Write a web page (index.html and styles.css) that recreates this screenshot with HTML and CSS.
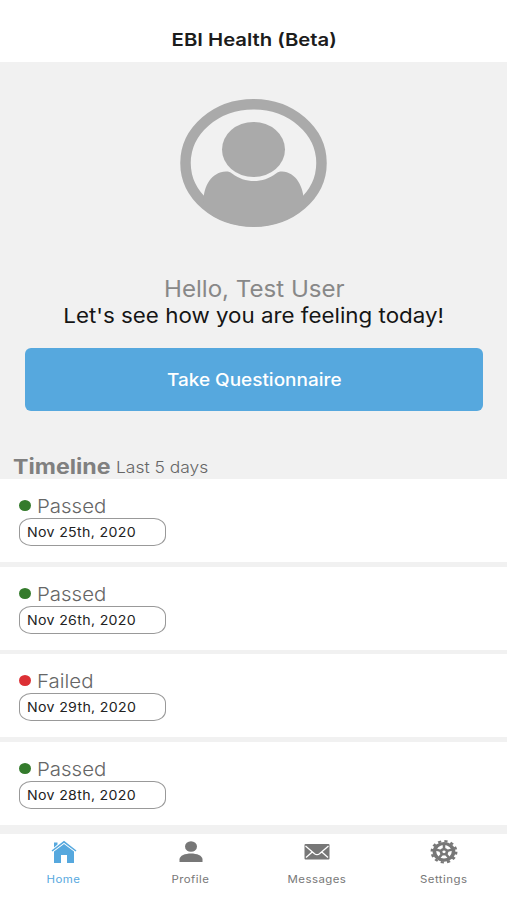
FILE: index.html
```html
<!DOCTYPE html>
<html lang="en">
<head>
<meta charset="utf-8">
<title>EBI Health (Beta)</title>
<link rel="stylesheet" href="styles.css">
</head>
<body>
<div class="app">
  <header class="header"><h1 class="wide title">EBI Health (Beta)</h1></header>
  <main class="main">
    <section class="hero">
      <svg class="avatar" viewBox="0 0 147 128" aria-hidden="true">
        <defs><clipPath id="ring"><ellipse cx="73.5" cy="64" rx="73" ry="63.5"/></clipPath></defs>
        <ellipse cx="73.5" cy="64" rx="68" ry="58.7" fill="none" stroke="#aaa" stroke-width="10.5"/>
        <g clip-path="url(#ring)" fill="#aaa">
          <path d="M23.500 106C22.500 88 31 73 46 72.500C49 72.500 50 73 52 74.500C65 84.500 83 84.500 96 74.500C98 73 99 72.500 102 72.500C116 73 124.500 88 124 106L110 128H38Z"/>
          <ellipse cx="73.500" cy="50.500" rx="31.500" ry="27.500"/>
        </g>
      </svg>
      <p class="wide hello">Hello, Test User</p>
      <p class="wide prompt">Let's see how you are feeling today!</p>
      <button class="button"><span class="wide">Take Questionnaire</span></button>
    </section>
    <h2 class="timeline"><span class="wide left name">Timeline</span><span class="wide left range">Last 5 days</span></h2>
    <ul class="list">
      <li class="row"><div class="status"><i class="dot"></i><span class="wide left">Passed</span></div><div class="date"><span class="wide left">Nov 25th, 2020</span></div></li>
      <li class="row"><div class="status"><i class="dot"></i><span class="wide left">Passed</span></div><div class="date"><span class="wide left">Nov 26th, 2020</span></div></li>
      <li class="row"><div class="status"><i class="dot failed"></i><span class="wide left">Failed</span></div><div class="date"><span class="wide left">Nov 29th, 2020</span></div></li>
      <li class="row"><div class="status"><i class="dot"></i><span class="wide left">Passed</span></div><div class="date"><span class="wide left">Nov 28th, 2020</span></div></li>
    </ul>
  </main>
  <nav class="tabs">
    <a class="tab active">
      <svg class="icon" viewBox="0 0 28 26"><path d="M4 3.500H7.500V5.500L4 8.500Z"/><path d="M2 12L14 2.800L26 12" fill="none" stroke="currentColor" stroke-width="1.500"/><path d="M4 12.500L14 5L24 12.500V24H17V16H11V24H4Z"/></svg>
      <span class="wide">Home</span>
    </a>
    <a class="tab">
      <svg class="icon" viewBox="0 0 28 26"><ellipse cx="14" cy="7.500" rx="6" ry="5.300"/><path d="M2.500 23V20.500C2.500 12.500 25.500 12.500 25.500 20.500V23Z"/></svg>
      <span class="wide">Profile</span>
    </a>
    <a class="tab">
      <svg class="icon" viewBox="0 0 28 26"><rect x="1.500" y="5" width="25" height="15.500" rx="1"/><path d="M2.500 7L11.500 14.700Q14 16.700 16.500 14.700L25.500 7M3 18.500L9.500 12.800M25 18.500L18.500 12.800" fill="none" stroke="#fff" stroke-width="1.300"/></svg>
      <span class="wide">Messages</span>
    </a>
    <a class="tab">
      <svg class="icon" viewBox="0 0 28 26"><g fill="none" stroke="currentColor" transform="translate(14 12.800) scale(1.150 1)"><circle r="8.300" stroke-width="3.200"/><circle r="10.600" stroke-width="2.200" stroke-dasharray="2.775 2.775"/><circle r="2.600" stroke-width="2.400"/><path d="M0-3V-8M2.850-.93L7.600-2.470M1.760 2.430L4.700 6.470M-1.760 2.430L-4.700 6.470M-2.850-.93L-7.600-2.470" stroke-width="2.200"/></g></svg>
      <span class="wide">Settings</span>
    </a>
  </nav>
</div>
</body>
</html>
```
FILE: styles.css
```css
* { box-sizing: border-box; margin: 0; padding: 0; }
body { font-family: Inter, "Liberation Sans", sans-serif; background: #fff; }
.app { height: 900px; display: flex; flex-direction: column; overflow: hidden; }
.wide { display: inline-block; white-space: nowrap; transform: scaleX(1.09); }
.left { transform-origin: left center; }
.header { height: 62px; flex: none; padding: 17px 0 0 1px; text-align: center; }
.title { font-size: 17.5px; line-height: 46px; font-weight: 600; color: #1c1c1c; transform: scaleX(1.16); }
.main { height: 772px; flex: none; background: #f1f1f1; }
.hero { height: 349px; padding: 37px 24px 0 25px; display: flex; flex-direction: column; align-items: center; }
.avatar { width: 147px; height: 128px; flex: none; margin-right: 2px; }
.hello { margin-top: 48px; font-size: 22.5px; line-height: 28px; color: #888; transform: scaleX(1.07); }
.prompt { font-size: 20.5px; line-height: 26px; color: #151515; }
.button { width: 100%; height: 63px; margin-top: 19px; padding-top: 1px; border: 0; border-radius: 6px; background: #56a8de; color: #fff; font: 500 17px/62px Inter, sans-serif; }
.button .wide { transform: scaleX(1.115); }
.timeline { height: 68px; padding: 43px 0 0 13px; display: flex; line-height: 26px; }
.name { width: 103px; font-size: 20.5px; font-weight: 700; color: #808080; transform: scaleX(1.13); }
.range { font-size: 16px; line-height: 27px; font-weight: 300; color: #666; }
.list { list-style: none; display: flex; flex-direction: column; gap: 4.6px; }
.row { height: 83px; padding: 15px 0 0 19px; background: #fff; }
.status { height: 24px; padding-top: 1px; display: flex; align-items: center; gap: 6px; font-size: 19px; font-weight: 300; color: #666; }
.status .wide { transform: scaleX(1.075); }
.dot { width: 12px; height: 11px; margin-top: -2px; border-radius: 50%; background: #347b2c; }
.failed { background: #dc3035; }
.date { width: 147px; height: 28px; padding-left: 7px; border: 1px solid #999; border-radius: 12px/10px; font-size: 13px; line-height: 26px; letter-spacing: .3px; color: #222; }
.tabs { flex: 1; display: flex; background: #fff; }
.tab { flex: 1; padding: 5px 0 0 1px; display: flex; flex-direction: column; align-items: center; color: #777; font-size: 10.5px; line-height: 14px; letter-spacing: .4px; }
.icon { width: 28px; height: 26px; margin-bottom: 8px; fill: currentColor; }
.active { color: #56a8de; }
```
